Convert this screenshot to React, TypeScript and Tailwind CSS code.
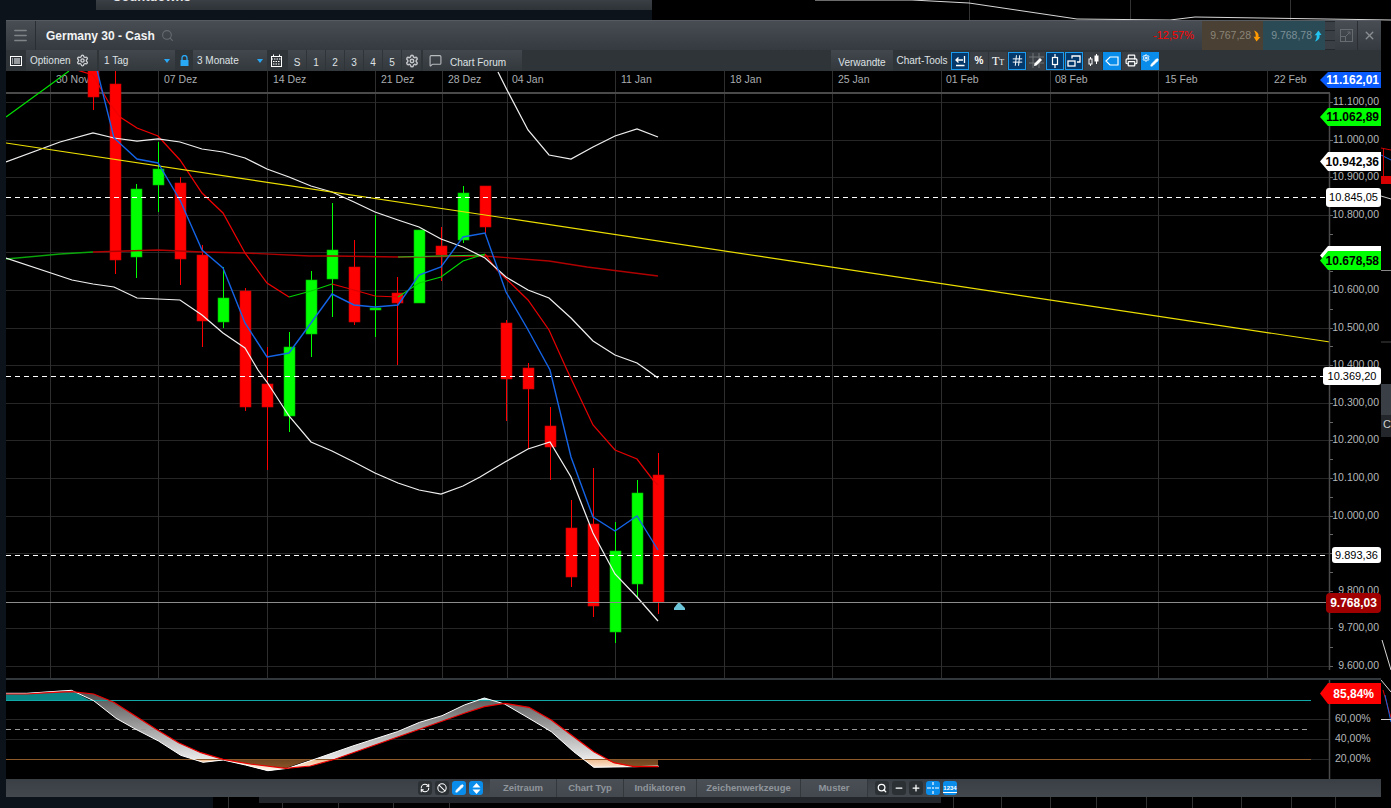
import { ReactNode } from "react";
import { Ban, Hash, Menu, MessageSquare, Minus, Pencil, Plus, Printer, RefreshCw, Search, Settings, X } from "lucide-react";

type Candle = [number, number, number, number, number, "r" | "g"];

// x, high, body top, body bottom, low
const CANDLES: Candle[] = [
  [93, 60, 60, 97, 110, "r"],
  [115, 60, 84, 260, 274, "r"],
  [136, 184, 189, 257, 278, "g"],
  [158, 142, 169, 185, 212, "g"],
  [180, 177, 183, 259, 285, "r"],
  [202, 245, 255, 321, 347, "r"],
  [223, 267, 298, 322, 328, "g"],
  [245, 288, 291, 407, 411, "r"],
  [267, 347, 384, 407, 470, "r"],
  [289, 332, 347, 416, 432, "g"],
  [311, 271, 280, 334, 357, "g"],
  [332, 203, 250, 279, 317, "g"],
  [354, 240, 267, 322, 325, "r"],
  [375, 215, 308, 310, 337, "g"],
  [397, 277, 293, 303, 365, "r"],
  [419, 230, 230, 303, 303, "g"],
  [441, 227, 246, 255, 281, "r"],
  [463, 186, 193, 240, 243, "g"],
  [485, 186, 186, 227, 233, "r"],
  [506, 320, 323, 379, 421, "r"],
  [528, 363, 368, 389, 449, "r"],
  [550, 407, 426, 447, 480, "r"],
  [571, 500, 528, 577, 587, "r"],
  [593, 468, 524, 606, 617, "r"],
  [615, 522, 551, 632, 643, "g"],
  [637, 480, 493, 584, 598, "g"],
  [658, 453, 475, 602, 614, "r"],
];

const BLUE = "97,70 114,138 137,159 158,163 180,200 202,250 223,268 245,323 267,357 289,353 311,323 332,294 354,305 375,307 398,305 419,275 441,267 463,237 485,233 506,292 527,328 550,370 571,457 593,517 615,531 637,516 658,550";
const RED_A = "77,70 93,75 109,103 120,117 137,128 158,136 180,160 202,193 223,213 245,253 267,283 289,297";
const RED_B = "332,284 354,290 375,296 398,297";
const RED_C = "485,254 497,270 528,300 549,330 567,370 593,425 615,450 637,459 653,480 658,485";
const GREEN_A = "289,297 311,291 332,284";
const GREEN_B = "398,297 419,283 441,277 463,261 485,254";
const UPPER_LEFT = "6,162 60,142 93,133 114,138 137,141 158,139 180,142 202,149 223,152 245,158 267,169 289,177 311,186 332,192 354,202 375,212 398,220 419,227 441,239 463,247 485,258 506,277 528,290 549,298 571,318 593,341 615,355 637,363 647,370 658,378";
const UPPER_TOP = "498,72 507,90 528,130 549,155 571,159 593,147 615,136 637,129 658,137";
const LOWER = "6,258 60,276 72,280 93,284 114,287 137,298 158,299 180,300 202,315 223,333 245,348 258,370 267,382 289,416 311,442 332,451 354,462 375,473 398,483 419,490 441,494 463,486 480,477 505,462 528,449 550,442 571,477 593,533 615,574 637,597 658,621";

const STO_FAST = [[12, 70], [60, 70], [160, 61], [210, 92], [260, 145], [300, 175], [355, 213], [405, 256], [455, 277], [500, 270], [550, 285], [600, 302], [645, 295], [700, 270], [790, 228], [890, 185], [940, 157], [990, 137], [1040, 105], [1085, 84], [1130, 102], [1185, 145], [1235, 185], [1285, 245], [1330, 292], [1420, 290], [1475, 288]];
const STO_SLOW = [[12, 72], [60, 72], [110, 68], [160, 65], [210, 72], [255, 97], [300, 135], [350, 178], [400, 218], [450, 248], [500, 268], [560, 282], [640, 295], [695, 288], [750, 268], [840, 225], [940, 178], [1040, 130], [1085, 110], [1130, 100], [1185, 112], [1235, 150], [1285, 200], [1330, 245], [1375, 278], [1420, 290], [1475, 290]];

function sto(pts: number[][]) {
  return pts.map(([x, y]) => `${(x / 2.24).toFixed(1)},${(670 + y / 3).toFixed(1)}`);
}

const DATE_LINES = [50, 158, 267, 375, 442, 507, 615, 724, 832, 941, 1050, 1158, 1267];
const DATES: [number, string][] = [[56, "30 Nov"], [164, "07 Dez"], [273, "14 Dez"], [381, "21 Dez"], [448, "28 Dez"], [512, "04 Jan"], [621, "11 Jan"], [730, "18 Jan"], [838, "25 Jan"], [946, "01 Feb"], [1055, "08 Feb"], [1165, "15 Feb"], [1274, "22 Feb"]];
const PRICES = ["11.100,00", "11.000,00", "10.900,00", "10.800,00", "", "10.600,00", "10.500,00", "10.400,00", "10.300,00", "10.200,00", "10.100,00", "10.000,00", "", "9.800,00", "9.700,00", "9.600,00"];

function Chart() {
  const fast = sto(STO_FAST);
  const slow = sto(STO_SLOW);
  const band = [...fast, ...[...slow].reverse()].join(" ");
  return (
    <svg width="1375" height="708" viewBox="6 71 1375 708" className="block" fontFamily="'Liberation Sans', Arial, sans-serif">
      <defs>
        <linearGradient id="band" gradientUnits="userSpaceOnUse" x1="0" y1="695" x2="0" y2="762">
          <stop offset="0" stopColor="#555555" />
          <stop offset="1" stopColor="#f0f0f0" />
        </linearGradient>
        <linearGradient id="peach" gradientUnits="userSpaceOnUse" x1="0" y1="759" x2="0" y2="769">
          <stop offset="0" stopColor="#eeb88a" />
          <stop offset="1" stopColor="#fff0e4" />
        </linearGradient>
        <linearGradient id="brown" gradientUnits="userSpaceOnUse" x1="0" y1="759" x2="0" y2="769">
          <stop offset="0" stopColor="#6a4420" />
          <stop offset="1" stopColor="#8e5526" />
        </linearGradient>
        <clipPath id="lowzone"><rect x="6" y="759" width="700" height="20" /></clipPath>
      </defs>

      {/* price grid */}
      {PRICES.map((_, i) => (
        <line key={i} x1="6" x2="1329" y1={Math.round(102 + 37.6 * i) + 0.5} y2={Math.round(102 + 37.6 * i) + 0.5} stroke="#262626" />
      ))}
      {DATE_LINES.map((x) => (
        <line key={x} x1={x + 0.5} x2={x + 0.5} y1="71" y2="679" stroke="#2e2e2e" />
      ))}
      <rect x="6" y="92" width="1324" height="2" fill="#4a4a4a" />
      {DATES.map(([x, t]) => (
        <text key={t} x={x} y="83" fontSize="10.5" fill="#a9adb0">{t}</text>
      ))}

      {/* candles */}
      {CANDLES.map(([x, hi, top, bot, lo, c]) => (
        <g key={x}>
          <line x1={x + 0.5} x2={x + 0.5} y1={hi} y2={lo} stroke={c === "r" ? "#ff0000" : "#00ff00"} />
          <rect x={x - 5} y={top} width="11" height={Math.max(bot - top, 2)} fill={c === "r" ? "#ff0000" : "#00ff00"} stroke={c === "r" ? "#c80000" : "#00b400"} strokeWidth="0.6" />
        </g>
      ))}

      {/* moving averages */}
      <polyline points="6,259 60,254 93,252" fill="none" stroke="#0aa50a" strokeWidth="1.3" />
      <polyline points="93,252 158,250 202,252 245,253 310,256 333,256 400,257 485,256 549,261 587,267 658,276" fill="none" stroke="#b00000" strokeWidth="1.3" />
      <polyline points="398,257 485,255" fill="none" stroke="#22cc22" strokeWidth="1.2" />
      <polyline points="6,117 50,85 69,71" fill="none" stroke="#00e000" strokeWidth="1.2" />
      <polyline points={RED_A} fill="none" stroke="#f00000" strokeWidth="1.25" />
      <polyline points={GREEN_A} fill="none" stroke="#00d000" strokeWidth="1.2" />
      <polyline points={RED_B} fill="none" stroke="#e00000" strokeWidth="1.25" />
      <polyline points={GREEN_B} fill="none" stroke="#00d800" strokeWidth="1.2" />
      <polyline points={RED_C} fill="none" stroke="#e60000" strokeWidth="1.25" />
      <polyline points={UPPER_TOP} fill="none" stroke="#efefef" strokeWidth="1.25" />
      <polyline points={UPPER_LEFT} fill="none" stroke="#efefef" strokeWidth="1.25" />
      <polyline points={LOWER} fill="none" stroke="#efefef" strokeWidth="1.25" />
      <line x1="6" y1="143" x2="1330" y2="342" stroke="#ecdf00" strokeWidth="1.2" />
      <polyline points={BLUE} fill="none" stroke="#1464e6" strokeWidth="1.4" />

      {/* levels */}
      {[197.5, 376.5, 555.5].map((y) => (
        <line key={y} x1="6" x2="1330" y1={y} y2={y} stroke="#ffffff" strokeDasharray="5 4" />
      ))}
      <line x1="6" x2="1330" y1="602.5" y2="602.5" stroke="#8c8c8c" />
      <polygon points="674,610 685,610 685,608 680,603 678,603 674,608" fill="#6cc4d8" />

      {/* price axis */}
      <line x1="1329.5" x2="1329.5" y1="93" y2="779" stroke="#4a4a4a" strokeWidth="1.5" />
      {Array.from({ length: 32 }).map((_, i) => (
        <line key={i} x1="1330" x2="1333" y1={Math.round(102 + 18.8 * i) + 0.5} y2={Math.round(102 + 18.8 * i) + 0.5} stroke="#666666" />
      ))}
      {PRICES.map((p, i) => p && (
        <text key={p} x="1379" y={Math.round(102 + 37.6 * i) + 3} textAnchor="end" fontSize="10.5" fill="#b4b8bb">{p}</text>
      ))}

      {/* stochastic panel */}
      <rect x="6" y="670" width="1375" height="9" fill="#000000" />
      {DATE_LINES.map((x) => (
        <line key={x} x1={x + 0.5} x2={x + 0.5} y1="666" y2="679" stroke="#2e2e2e" />
      ))}
      <rect x="6" y="678" width="1375" height="2" fill="#33383d" />
      <line x1="6" x2="1329" y1="719.5" y2="719.5" stroke="#262626" />
      <line x1="6" x2="1329" y1="739.5" y2="739.5" stroke="#262626" />
      <polygon points="5,694 27,693 71,690 90,700.5 5,700.5" fill="#0a8585" />
      <polygon points={band} fill="url(#band)" />
      <polygon points={band} fill="url(#peach)" clipPath="url(#lowzone)" />
      <polygon points="225,759 250,764 286,768 312,759" fill="url(#brown)" />
      <polygon points="605,759 614,763 634,767 658,767 658,759" fill="url(#brown)" />
      <polygon points="475,700.5 484,698 493,700.5" fill="#b8f0f0" />
      <line x1="6" x2="1311" y1="700.5" y2="700.5" stroke="#12a8a8" />
      <line x1="6" x2="1311" y1="729.5" y2="729.5" stroke="#9a9a9a" strokeDasharray="5 4" />
      <line x1="6" x2="1311" y1="759.5" y2="759.5" stroke="#8e5a2a" />
      <line x1="1311" x2="1329" y1="759.5" y2="759.5" stroke="#262626" />
      <polyline points={fast.join(" ")} fill="none" stroke="#ffffff" />
      <polyline points={slow.join(" ")} fill="none" stroke="#f00000" strokeWidth="1.2" />
      {[["60,00%", 718], ["40,00%", 738], ["20,00%", 758]].map(([p, y]) => (
        <text key={p} x="1335" y={Number(y) + 4} fontSize="10.5" fill="#b4b8bb">{p}</text>
      ))}
    </svg>
  );
}

function Btn({ className, children }: { className: string; children?: ReactNode }) {
  return <div className={`flex h-full items-center bg-gradient-to-b from-[#42474d] to-[#33383d] text-[10px] text-[#dfe2e4] ${className}`}>{children}</div>;
}

function Tool({ kind, children }: { kind: "plain" | "outline" | "solid"; children: ReactNode }) {
  const cls =
    kind === "solid"
      ? "bg-[#0a8cea] text-white"
      : kind === "outline"
        ? "border border-[#1b9bf0] bg-[#06396b] text-white"
        : "bg-[#3a3f45] text-white";
  return <div className={`mr-px flex h-[18px] w-[18px] items-center justify-center ${cls}`}>{children}</div>;
}

function Round({ blue, children }: { blue?: boolean; children: ReactNode }) {
  return (
    <div className={`flex h-[14px] w-[14px] items-center justify-center rounded-[3px] text-white ${blue ? "bg-[#0a8cea]" : "bg-[#2b3035]"}`}>
      {children}
    </div>
  );
}

function Tab({ className, children }: { className: string; children: ReactNode }) {
  return (
    <div className={`flex h-full items-center justify-center border-r border-[#33383d] bg-gradient-to-b from-[#4a4f55] to-[#43484e] text-[9.5px] font-bold text-[#8f959b] ${className}`}>
      {children}
    </div>
  );
}

function Tags() {
  return (
    <>
      <div className="absolute right-0 top-[1px] flex h-[16px] w-[61px] items-center justify-end bg-[#0a5cff] pr-[2px] text-[12px] font-bold text-white [clip-path:polygon(8px_0,100%_0,100%_100%,8px_100%,0_50%)]">11.162,01</div>
      <div className="absolute right-0 top-[37px] flex h-[18px] w-[61px] items-center justify-end bg-[#00ff00] pr-[2px] text-[12px] font-bold text-black [clip-path:polygon(8px_0,100%_0,100%_100%,8px_100%,0_50%)]">11.062,89</div>
      <div className="absolute right-0 top-[81px] flex h-[19px] w-[61px] items-center justify-end bg-white pr-[2px] text-[12px] font-bold text-black [clip-path:polygon(8px_0,100%_0,100%_100%,8px_100%,0_50%)]">10.942,36</div>
      <div className="absolute right-0 top-[117px] flex h-[19px] w-[55px] items-center justify-center rounded-[3px] bg-white text-[11px] text-black">10.845,05</div>
      <div className="absolute right-0 top-[175px] h-[19px] w-[61px] bg-white [clip-path:polygon(8px_0,100%_0,100%_100%,8px_100%,0_50%)]" />
      <div className="absolute right-0 top-[180px] flex h-[19px] w-[61px] items-center justify-end bg-[#00ff00] pr-[2px] text-[12px] font-bold text-black [clip-path:polygon(8px_0,100%_0,100%_100%,8px_100%,0_50%)]">10.678,58</div>
      <div className="absolute right-0 top-[296px] flex h-[18px] w-[58px] items-center justify-center rounded-[3px] bg-white text-[11px] text-black">10.369,20</div>
      <div className="absolute right-0 top-[476px] flex h-[16px] w-[49px] items-center justify-center rounded-[3px] bg-white text-[11px] text-black">9.893,36</div>
      <div className="absolute right-0 top-[522px] flex h-[20px] w-[55px] items-center justify-center rounded-[4px] bg-[#a00000] text-[12px] font-bold text-white">9.768,03</div>
      <div className="absolute right-0 top-[612px] flex h-[21px] w-[61px] items-center justify-end bg-[#ff0000] pr-[7px] text-[12px] font-bold text-white [clip-path:polygon(8px_0,100%_0,100%_100%,8px_100%,0_50%)]">85,84%</div>
    </>
  );
}

function Backdrop() {
  return (
    <div className="absolute inset-0 overflow-hidden bg-[#0c131a]">
      {/* other windows behind the chart */}
      <svg width="1391" height="808" viewBox="0 0 1391 808" className="absolute left-0 top-0">
        <rect x="652" y="0" width="739" height="20" fill="#000000" />
        <rect x="1381" y="0" width="10" height="808" fill="#000000" />
        <rect x="213" y="797" width="1178" height="11" fill="#000000" />
        {[969, 1130, 1290].map((x) => (
          <line key={x} x1={x + 0.5} x2={x + 0.5} y1="0" y2="20" stroke="#333333" />
        ))}
        {[228, 282, 338, 393, 449, 953, 1001, 1050, 1096, 1146, 1192, 1241, 1291, 1335].map((x) => (
          <line key={x} x1={x + 0.5} x2={x + 0.5} y1="797" y2="808" stroke="#333333" />
        ))}
        <polyline points="815,0 912,0 969,3 1077,19 1170,20 1195,17 1391,20" fill="none" stroke="#d8d8d8" />
        <polyline points="1381,148 1391,150" fill="none" stroke="#d00000" />
        <polyline points="1381,155 1391,160" fill="none" stroke="#1464e6" />
        <rect x="1381" y="176" width="10" height="8" fill="#d80000" />
        <line x1="1383.5" x2="1383.5" y1="148" y2="176" stroke="#d00000" />
        <polyline points="1381,196 1391,199" fill="none" stroke="#cccccc" />
        <line x1="1381" x2="1391" y1="270.5" y2="270.5" stroke="#888888" />
        <rect x="1381" y="341" width="10" height="2" fill="#222222" />
        <rect x="1381" y="384" width="10" height="31" fill="#3a3f45" />
        <rect x="1381" y="415" width="10" height="22" fill="#23272b" />
        <polyline points="1382,640 1391,670" fill="none" stroke="#d8d8d8" />
        <polyline points="1381,680 1391,692" fill="none" stroke="#d8d8d8" />
        <polyline points="1383,690 1391,718" fill="none" stroke="#e00000" />
        <polyline points="1385,695 1391,722" fill="none" stroke="#1464e6" />
        <line x1="1381" x2="1391" y1="719.5" y2="719.5" stroke="#cccccc" />
      </svg>
      <div className="absolute left-[96px] top-0 h-[10px] w-[556px] overflow-hidden bg-gradient-to-b from-[#3a3f45] to-[#2e3338]">
        <div className="absolute left-[16px] top-[-13px] text-[13px] font-bold text-[#e4e6e8]">Countdowns</div>
      </div>
      <div className="absolute left-[259px] top-[797px] h-[6px] w-[682px] bg-[#23272b]" />
      <div className="absolute left-[1381px] top-[416px] pl-[2px] text-[11px] text-[#d0d0d0]">C</div>
    </div>
  );
}

export default function App() {
  return (
    <div className="relative h-[808px] w-[1391px] overflow-hidden [font-family:'Liberation_Sans',Arial,sans-serif]">
      <Backdrop />
      <div className="absolute left-[6px] top-[20px] flex h-[777px] w-[1375px] flex-col bg-black">
        {/* title bar */}
        <div className="flex h-[30px] shrink-0 items-stretch border-t border-[#565b61] bg-gradient-to-b from-[#484d53] to-[#353a40]">
          <div className="flex w-[30px] items-center justify-center border-r border-[#2a2e32]">
            <Menu size={17} className="text-[#7f8489]" />
          </div>
          <div className="ml-[10px] flex items-center text-[12px] font-bold text-[#f2f3f4]">Germany 30 - Cash</div>
          <Search size={13} className="ml-[6px] self-center text-[#666b70]" />
          <div className="flex-1" />
          <div className="mr-[8px] flex items-center text-[11px] text-[#ff0000]">-12,57%</div>
          <div className="flex w-[61px] items-center justify-end bg-[#4a4033] pr-[2px] text-[10.5px] text-[#8b8578]">
            9.767,28
            <svg width="9" height="12" viewBox="0 0 9 12" className="ml-[1px]"><path d="M2 0.5 C6 2 7 4 6.5 7 L8.5 7 L4.5 11.5 L1.5 6.5 L3.5 7 C4 5 3.5 3 2 0.5Z" fill="#ff9a00" /></svg>
          </div>
          <div className="flex w-[62px] items-center justify-end bg-[#2a4a55] pr-[3px] text-[10.5px] text-[#7c8f96]">
            9.768,78
            <svg width="9" height="12" viewBox="0 0 9 12" className="ml-[1px]"><path d="M2 11.5 C6 10 7 8 6.5 5 L8.5 5 L5.5 0.5 L1.5 5.5 L3.5 5 C4 7 3.5 9 2 11.5Z" fill="#22c4f0" /></svg>
          </div>
          <div className="flex w-[10px] flex-col gap-px bg-[#25292d] py-px">
            <div className="flex-1 bg-[#3a3f45]" />
            <div className="flex-1 bg-[#3a3f45]" />
            <div className="flex-1 bg-[#3a3f45]" />
          </div>
          <div className="flex w-[23px] items-center justify-center border-r border-[#2a2e32]">
            <svg width="13" height="13" viewBox="0 0 13 13" fill="none" stroke="#666b70"><rect x="0.5" y="0.5" width="12" height="12" /><rect x="0.5" y="7.5" width="5" height="5" /><path d="M6 7 L10 3 M7.5 3 H10 V5.5" /></svg>
          </div>
          <div className="flex w-[23px] items-center justify-center">
            <X size={13} strokeWidth={2.5} className="text-[#8a8f94]" />
          </div>
        </div>

        {/* chart toolbar */}
        <div className="flex h-[21px] shrink-0 items-stretch bg-[#2f3439]">
          <div className="flex w-[20px] items-center justify-center">
            <svg width="12" height="10" viewBox="0 0 12 10" fill="none" stroke="#ffffff"><rect x="0.5" y="0.5" width="11" height="9" /><path d="M2 3 H3 M4 3 H10 M2 5 H3 M4 5 H10 M2 7 H3 M4 7 H10" /></svg>
          </div>
          <Btn className="w-[71px] justify-between px-[4px]">Optionen <Settings size={13} strokeWidth={2.5} className="mr-[4px] text-[#cfd2d4]" /></Btn>
          <Btn className="ml-[2px] w-[76px] justify-between px-[5px]">
            1 Tag
            <span className="h-0 w-0 border-x-[3px] border-t-[4px] border-x-transparent border-t-[#29a8f5]" />
          </Btn>
          <div className="flex w-[18px] items-center justify-center">
            <svg width="9" height="11" viewBox="0 0 9 11" fill="none"><path d="M2 5 V3 a2.5 2.5 0 0 1 5 0 V5" stroke="#29a8f5" strokeWidth="1.3" /><rect x="0.5" y="5" width="8" height="6" fill="#29a8f5" /></svg>
          </div>
          <Btn className="w-[74px] justify-between px-[4px]">
            3 Monate
            <span className="h-0 w-0 border-x-[3px] border-t-[4px] border-x-transparent border-t-[#29a8f5]" />
          </Btn>
          <div className="flex w-[21px] items-center pl-[3px]">
            <svg width="13" height="13" viewBox="0 0 13 13" fill="none" stroke="#ffffff"><rect x="1.5" y="2.5" width="10" height="10" /><path d="M1.5 5 H11.5 M3.5 0.5 V3 M9.5 0.5 V3 M3 7.5 H10 M3 10 H10" strokeDasharray="1.5 1" /></svg>
          </div>
          {["S", "1", "2", "3", "4", "5"].map((t) => (
            <Btn key={t} className="mr-px w-[18px] justify-center pt-[3px]">{t}</Btn>
          ))}
          <Btn className="w-[19px] justify-center"><Settings size={14} className="text-[#c4c7ca]" strokeWidth={2.5} /></Btn>
          <Btn className="ml-[2px] w-[99px] pl-[6px]">
            <MessageSquare size={13} className="text-[#b9bcbf]" />
            <span className="ml-[8px] pt-[3px]">Chart Forum</span>
          </Btn>
          <div className="w-[309px]" />
          <Btn className="w-[62px] justify-center pt-[3px]">Verwandte</Btn>
          <div className="flex w-[58px] items-center justify-center text-[10px] text-[#dfe2e4]">Chart-Tools</div>
          <div className="flex items-center">
            <Tool kind="outline">
              <svg width="12" height="12" viewBox="0 0 12 12" fill="none" stroke="#ffffff" strokeWidth="1.3"><path d="M10.5 1 V8 M9 5 H2 M4.5 2.5 L2 5 L4.5 7.5 M2 10.5 H10.5" /></svg>
            </Tool>
            <Tool kind="plain"><span className="text-[10px] font-bold">%</span></Tool>
            <Tool kind="plain"><span className="font-['Liberation_Serif',serif] text-[12px] leading-none">T<span className="text-[8px]">T</span></span></Tool>
            <Tool kind="outline"><Hash size={13} strokeWidth={1.8} /></Tool>
            <Tool kind="plain">
              <svg width="15" height="15" viewBox="0 0 15 15" fill="none"><path d="M4 0 V15 M10 0 V15 M0 4 H15 M0 10 H15" stroke="#6f7479" /><path d="M5 13 L5.5 10.5 L11 5 L13 7 L7.5 12.5 Z" fill="#ffffff" /></svg>
            </Tool>
            <Tool kind="outline">
              <svg width="10" height="14" viewBox="0 0 10 14" fill="none" stroke="#ffffff" strokeWidth="1.2"><path d="M5 0 V3.5 M5 10.5 V14" /><rect x="2.5" y="3.5" width="5" height="7" /></svg>
            </Tool>
            <Tool kind="outline">
              <svg width="14" height="12" viewBox="0 0 14 12" fill="none" stroke="#ffffff" strokeWidth="1.3"><rect x="1" y="6" width="7" height="5" /><path d="M5 3.5 V1 H13 V7 H10" /></svg>
            </Tool>
            <Tool kind="plain">
              <svg width="15" height="15" viewBox="0 0 15 15" fill="none" stroke="#ffffff"><path d="M4.5 4 V13 M10.5 1 V11" /><rect x="3" y="6" width="3" height="5" fill="#3a3f45" /><rect x="9" y="3" width="3" height="5" fill="#ffffff" /></svg>
            </Tool>
            <Tool kind="solid">
              <svg width="14" height="10" viewBox="0 0 14 10" fill="none" stroke="#ffffff" strokeWidth="1.2"><path d="M13 1 H5 L1 5 L5 9 H13 Z" /></svg>
            </Tool>
            <Tool kind="plain"><Printer size={13} strokeWidth={2.2} /></Tool>
            <Tool kind="solid">
              <Settings size={8} strokeWidth={3} className="-mt-[6px]" />
              <Pencil size={9} fill="#ffffff" className="mt-[3px]" />
            </Tool>
          </div>
        </div>

        {/* chart */}
        <div className="relative h-[708px] shrink-0 overflow-hidden">
          <Chart />
          <Tags />
        </div>

        {/* bottom bar */}
        <div className="flex h-[18px] shrink-0 items-center bg-gradient-to-b from-[#3a3f45] to-[#43484e]">
          <div className="ml-[412px] flex w-[72px] gap-[3px]">
            <Round><RefreshCw size={10} strokeWidth={2.5} /></Round>
            <Round><Ban size={10} strokeWidth={2.5} /></Round>
            <Round blue><Pencil size={9} fill="#ffffff" /></Round>
            <Round blue>
              <svg width="9" height="11" viewBox="0 0 9 11" fill="#ffffff"><path d="M4.5 0 L8.5 4.5 H0.5 Z M4.5 11 L8.5 6.5 H0.5 Z" /></svg>
            </Round>
          </div>
          <div className="flex h-full items-stretch">
            <Tab className="w-[67px]">Zeitraum</Tab>
            <Tab className="w-[67px]">Chart Typ</Tab>
            <Tab className="w-[73px]">Indikatoren</Tab>
            <Tab className="w-[104px]">Zeichenwerkzeuge</Tab>
            <Tab className="w-[67px]">Muster</Tab>
          </div>
          <div className="ml-[7px] flex gap-[3px]">
            <Round><Search size={10} strokeWidth={3} /></Round>
            <Round><Minus size={10} strokeWidth={3} /></Round>
            <Round><Plus size={10} strokeWidth={3} /></Round>
            <Round blue>
              <svg width="12" height="12" viewBox="0 0 12 12" stroke="#ffffff" strokeWidth="1.2"><path d="M6 0 V3 M6 5 V7 M6 9 V12 M0 6 H4 M8 6 H12" /></svg>
            </Round>
            <Round blue>
              <span className="border-b border-white text-[6px] font-bold leading-[8px]">1234</span>
            </Round>
          </div>
        </div>
      </div>
    </div>
  );
}
